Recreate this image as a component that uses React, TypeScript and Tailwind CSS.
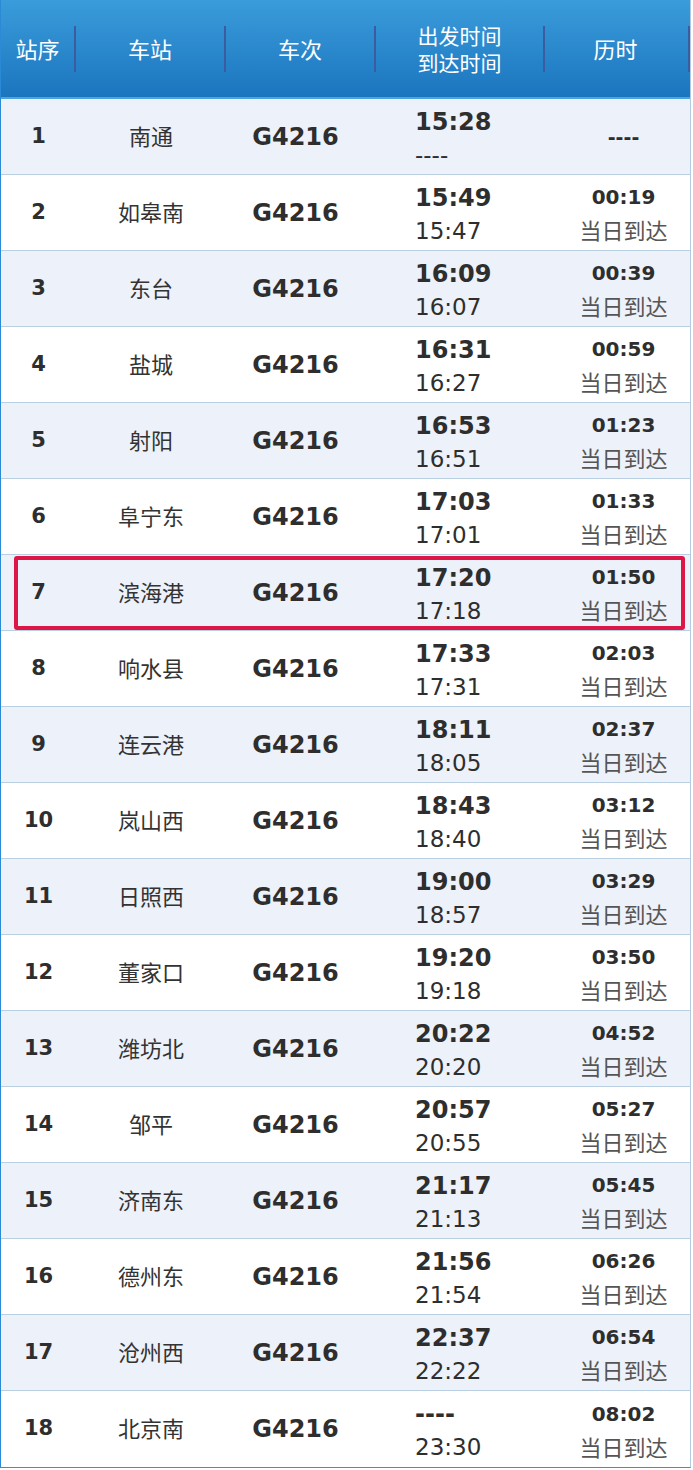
const rows = [
  { no: 1, name: "南通", dep: "15:28", arr: "----", dur: "----" },
  { no: 2, name: "如皋南", dep: "15:49", arr: "15:47", dur: "00:19" },
  { no: 3, name: "东台", dep: "16:09", arr: "16:07", dur: "00:39" },
  { no: 4, name: "盐城", dep: "16:31", arr: "16:27", dur: "00:59" },
  { no: 5, name: "射阳", dep: "16:53", arr: "16:51", dur: "01:23" },
  { no: 6, name: "阜宁东", dep: "17:03", arr: "17:01", dur: "01:33" },
  { no: 7, name: "滨海港", dep: "17:20", arr: "17:18", dur: "01:50" },
  { no: 8, name: "响水县", dep: "17:33", arr: "17:31", dur: "02:03" },
  { no: 9, name: "连云港", dep: "18:11", arr: "18:05", dur: "02:37" },
  { no: 10, name: "岚山西", dep: "18:43", arr: "18:40", dur: "03:12" },
  { no: 11, name: "日照西", dep: "19:00", arr: "18:57", dur: "03:29" },
  { no: 12, name: "董家口", dep: "19:20", arr: "19:18", dur: "03:50" },
  { no: 13, name: "潍坊北", dep: "20:22", arr: "20:20", dur: "04:52" },
  { no: 14, name: "邹平", dep: "20:57", arr: "20:55", dur: "05:27" },
  { no: 15, name: "济南东", dep: "21:17", arr: "21:13", dur: "05:45" },
  { no: 16, name: "德州东", dep: "21:56", arr: "21:54", dur: "06:26" },
  { no: 17, name: "沧州西", dep: "22:37", arr: "22:22", dur: "06:54" },
  { no: 18, name: "北京南", dep: "----", arr: "23:30", dur: "08:02" },
];

const Sep = () => <div className="w-[2px] h-[46px] bg-[#3b5d9f] shrink-0" />;

const App = () => {
  return (
    <div className="w-[693px] h-[1470px] bg-white font-['DejaVu_Sans','Noto_Sans_CJK_SC',sans-serif] text-[#2e2e2e]">
      <div className="w-[691px] border-l border-l-[#2b8ad6] border-r border-r-[#b3cbe0] border-b border-b-[#3a8fd0]">
        {/* header */}
        <div className="flex items-center h-[99px] bg-linear-to-b from-[#3a9cda] to-[#1b75bf] border-b-2 border-[#4ea3dc] text-white text-[22px] font-['Noto_Sans_CJK_SC',sans-serif]">
          <div className="w-[73px] text-center">站序</div>
          <Sep />
          <div className="w-[148px] text-center">车站</div>
          <Sep />
          <div className="w-[148px] text-center">车次</div>
          <Sep />
          <div className="w-[167px] text-center text-[21px] leading-[27px] pt-[1px]">
            <div>出发时间</div>
            <div>到达时间</div>
          </div>
          <Sep />
          <div className="flex-1 text-center pr-[2px]">历时</div>
          <Sep />
        </div>

        {rows.map((r) => (
          <div
            key={r.no}
            className={`relative flex items-center h-[76px] border-b border-[#b9d0e3] last:border-b-0 ${
              r.no % 2 === 1 ? "bg-[#edf1f9]" : "bg-white"
            }`}
          >
            <div className="w-[75px] text-center font-bold text-[21px]">{r.no}</div>
            <div className="w-[150px] text-center text-[22px] font-['Noto_Sans_CJK_SC',sans-serif] text-[#333] pb-[3px]">
              {r.name}
            </div>
            <div className="w-[150px] text-center pr-[11px] font-bold text-[24px]">G4216</div>
            <div className="w-[169px] pl-[39px] leading-[33px] pt-[4px]">
              <div className="font-bold text-[24px]">{r.dep}</div>
              <div className="text-[23px]">{r.arr}</div>
            </div>
            <div className="flex-1 text-center pl-[12px]">
              {r.no === 1 ? (
                <div className="font-bold text-[19px] pt-[2px]">----</div>
              ) : (
                <div className="leading-[32px] pt-[1px]">
                  <div className="font-bold text-[20px]">{r.dur}</div>
                  <div className="text-[22px] text-[#555] font-['Noto_Sans_CJK_SC',sans-serif]">当日到达</div>
                </div>
              )}
            </div>
            {r.no === 7 && (
              <div className="absolute left-[13px] right-[5px] top-[1px] bottom-0 border-4 border-[#dc1646] rounded-[3px]" />
            )}
          </div>
        ))}
      </div>
    </div>
  );
};

export default App;
